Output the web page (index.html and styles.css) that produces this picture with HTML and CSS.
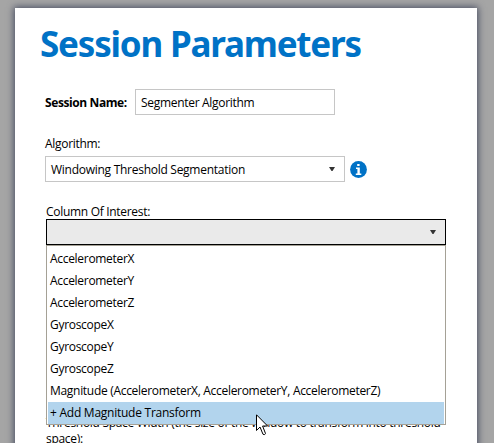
FILE: index.html
```html
<!DOCTYPE html>
<html lang="en">
<head>
<meta charset="utf-8">
<title>Session Parameters</title>
<link rel="stylesheet" href="styles.css">
</head>
<body>
<main class="sheet">
  <h1 class="title">Session Parameters</h1>
  <div class="name-row">
    <label class="name-label">Session Name:</label>
    <div class="field name-field">Segmenter Algorithm</div>
  </div>
  <div class="label algo-label">Algorithm:</div>
  <div class="algo-row">
    <div class="field select"><span>Windowing Threshold Segmentation</span>
      <svg class="arrow" width="6" height="4" viewBox="0 0 6 4"><path d="M0 0H6L3.5 4H2.5Z"/></svg>
    </div>
    <svg class="info" width="17" height="17" viewBox="0 0 17 17"><circle cx="8.5" cy="8.5" r="8.4" fill="#0072c6"/><path d="M7.2 3.1h2.4v2H7.2zM6 6.5h3.8v6h1.5v1.4H5.8v-1.4h1.6V7.9H6z" fill="#fff"/></svg>
  </div>
  <div class="label column-label">Column Of Interest:</div>
  <div class="combo">
    <div class="combo-head"><svg class="arrow" width="6" height="4" viewBox="0 0 6 4"><path d="M0 0H6L3.5 4H2.5Z"/></svg></div>
    <ul class="menu">
      <li>AccelerometerX</li>
      <li>AccelerometerY</li>
      <li>AccelerometerZ</li>
      <li>GyroscopeX</li>
      <li>GyroscopeY</li>
      <li>GyroscopeZ</li>
      <li>Magnitude (AccelerometerX, AccelerometerY, AccelerometerZ)</li>
      <li class="active">+ Add Magnitude Transform</li>
    </ul>
  </div>
  <p class="hint">Threshold Space Width (the size of the window to transform into threshold<br>space):</p>
</main>
<svg class="cursor" width="13" height="22" viewBox="0 0 13 22"><path d="M.5 .8V16.5L4 13L7 20.3Q9 21.3 9.5 19.5L6.6 12H11.6Z" fill="#fff" stroke="#000"/></svg>
</body>
</html>
```
FILE: styles.css
```css
* { box-sizing: border-box; }
body {
  margin: 0;
  width: 494px;
  height: 443px;
  overflow: hidden;
  padding: 8px 17px 0 15px;
  background: #a5a5a5;
  color: #000;
  font: 12px/16px "Open Sans", "Noto Sans", sans-serif;
  letter-spacing: -0.3px;
}
.sheet {
  width: 462px;
  height: 448px;
  padding-left: 30px;
  background: #fff;
  box-shadow: 0 0 7px 1px #454b60;
}
.title {
  margin: 0 0 0 -5px;
  padding-top: 14px;
  height: 81px;
  font: bold 35px/44px "Noto Sans", sans-serif;
  letter-spacing: -1.2px;
  color: #0072c6;
}
.name-row { display: flex; }
.name-label { width: 90px; padding-top: 6px; font-weight: bold; letter-spacing: -0.4px; }
.field { height: 26px; border: 1px solid #c6c6c6; padding: 5px 5px 3px; }
.name-field { width: 200px; }
.algo-label { margin-top: 21px; height: 20px; }
.algo-row { display: flex; align-items: center; gap: 5px; }
.select { display: flex; justify-content: space-between; align-items: flex-start; width: 300px; padding-right: 9px; letter-spacing: -0.27px; }
.arrow { fill: #333; flex: none; }
.select .arrow { margin-top: 5px; }
.column-label { margin: 22px 0 0 1px; height: 15px; }
.combo { position: relative; width: 400px; margin-left: 1px; }
.combo-head { display: flex; justify-content: flex-end; align-items: center; height: 26px; padding-right: 9px; border: 1px solid #000; background: #eaeaea; }
.menu {
  position: absolute;
  top: 26px;
  left: 0;
  width: 400px;
  height: 180px;
  margin: 0;
  padding: 2px 1px;
  border: 1px solid #a5a196;
  background: #fff;
  list-style: none;
}
.menu li { height: 22px; padding: 3px 2px; }
.menu .active { background: #b2d4ed; letter-spacing: -0.25px; }
.hint { margin: 170px 0 0 1px; white-space: nowrap; }
.cursor { position: absolute; left: 256px; top: 414px; }
```
